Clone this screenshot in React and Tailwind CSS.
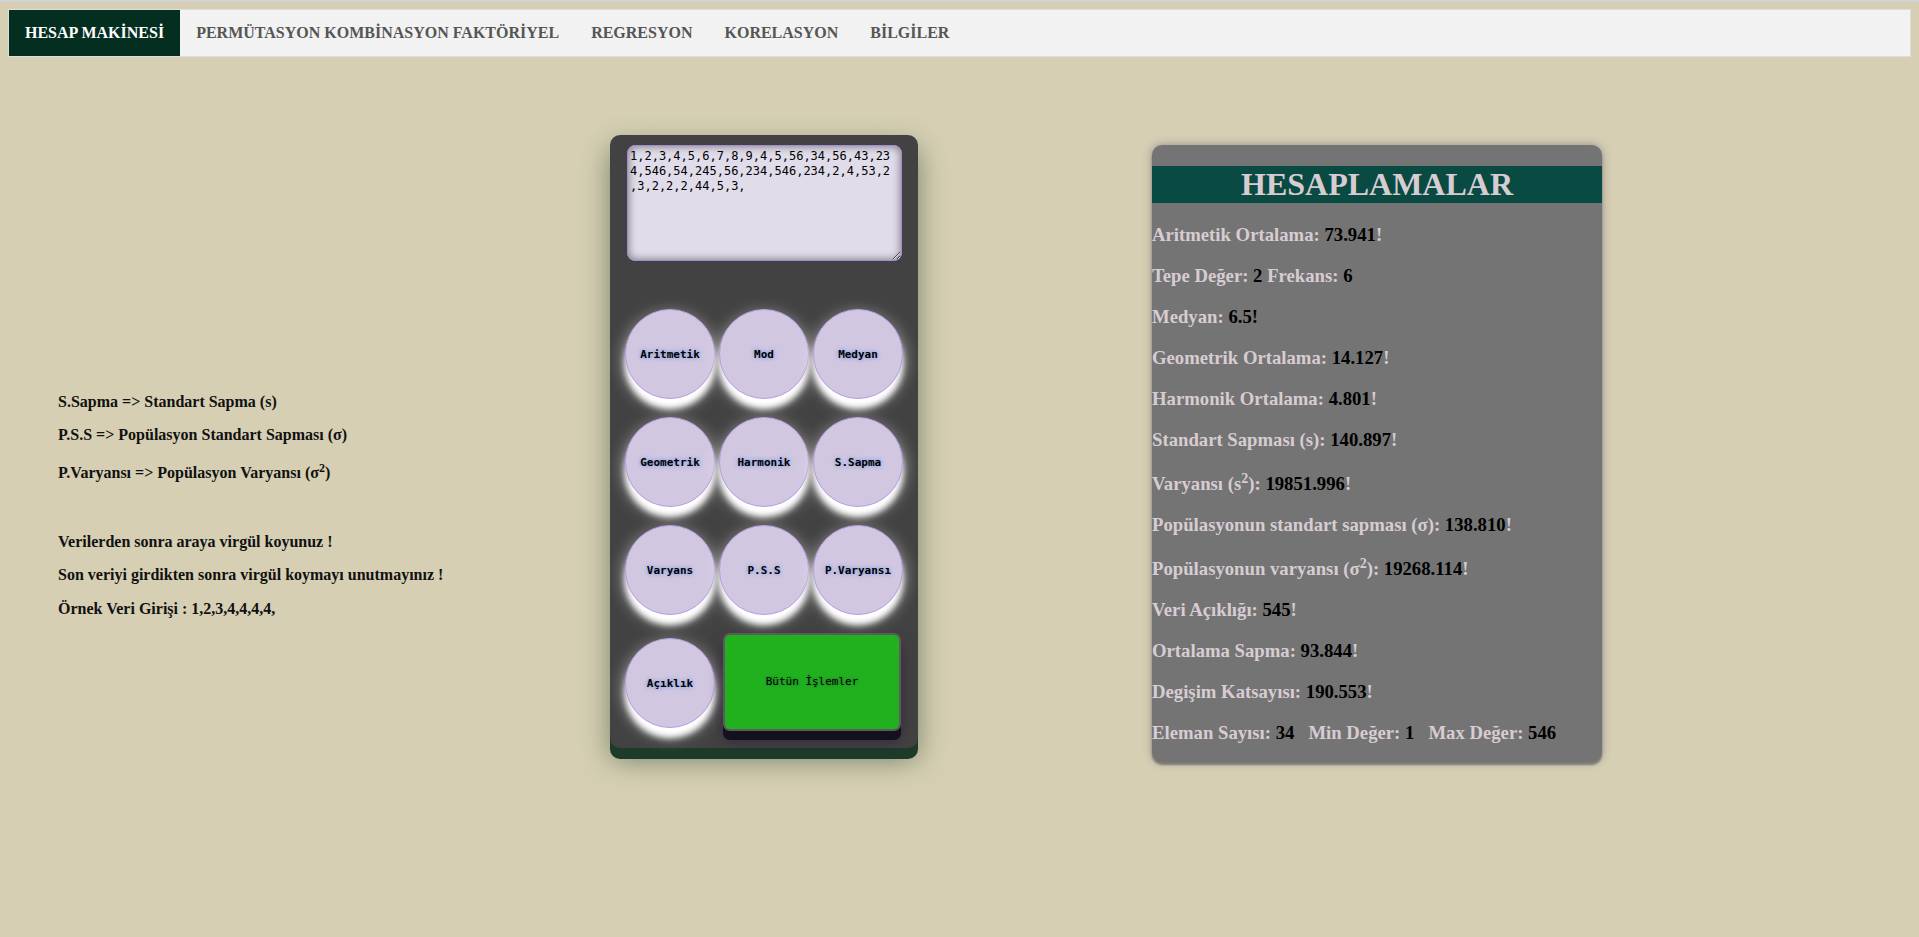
const tabs = ['HESAP MAKİNESİ', 'PERMÜTASYON KOMBİNASYON FAKTÖRİYEL', 'REGRESYON', 'KORELASYON', 'BİLGİLER'];

const circles = [
  ['Aritmetik', 'Mod', 'Medyan'],
  ['Geometrik', 'Harmonik', 'S.Sapma'],
  ['Varyans', 'P.S.S', 'P.Varyansı'],
];

const data = '1,2,3,4,5,6,7,8,9,4,5,56,34,56,43,234,546,54,245,56,234,546,234,2,4,53,2,3,2,2,2,44,5,3,';

function CircleButton({ label }) {
  return (
    <button className="w-[90px] h-[90px] shrink-0 rounded-full border border-[#b79de3] bg-[#d1c7e1] pt-[2px] text-[11px] font-bold text-black font-['DejaVu_Sans_Mono',monospace] [text-shadow:0_0_4px_rgba(59,123,224,0.75)] shadow-[0_10px_6px_#ffffff,0_6px_18px_rgba(255,255,255,0.6)]">
      {label}
    </button>
  );
}

function Row({ label, value, bang = true, bangDark = false }) {
  return (
    <h3 className="m-0 h-[22px] whitespace-nowrap text-[18.72px] font-bold leading-[22px] text-[#d8ccd3]">
      {label}
      <span className="text-black">{value}</span>
      {bang && <span className={bangDark ? 'text-black' : ''}>!</span>}
    </h3>
  );
}

export default function App() {
  return (
    <div className="min-h-screen bg-[#d6cfb3] font-['Liberation_Serif',serif]">
      <div className="h-[2px] bg-[#d3d3d3]" />
      <div className="px-2 pt-[7px]">
        <nav className="flex h-[48px] border border-[#dedede] bg-[#f2f2f2]">
          {tabs.map((t, i) => (
            <a
              key={t}
              className={`flex h-[46px] items-center px-4 text-[16px] font-bold ${i === 0 ? 'bg-[#032e20] text-white' : 'text-[#555]'}`}
            >
              {t}
            </a>
          ))}
        </nav>
      </div>

      <div className="flex items-start">
        {/* left info */}
        <div className="ml-[58px] mt-[336px] w-[552px] text-[16px] font-bold leading-[18px] text-[#111]">
          <p className="h-[18px]">S.Sapma =&gt; Standart Sapma (s)</p>
          <p className="mt-[15px] h-[18px]">P.S.S =&gt; Popülasyon Standart Sapması (σ)</p>
          <p className="mt-[20px] h-[18px]">P.Varyansı =&gt; Popülasyon Varyansı (σ<sup>2</sup>)</p>
          <p className="mt-[51px] h-[18px]">Verilerden sonra araya virgül koyunuz !</p>
          <p className="mt-[15px] h-[18px]">Son veriyi girdikten sonra virgül koymayı unutmayınız !</p>
          <p className="mt-[16px] h-[18px]">Örnek Veri Girişi : 1,2,3,4,4,4,4,</p>
        </div>

        {/* calculator */}
        <div className="mt-[78px] flex h-[613px] w-[308px] flex-col rounded-[10px] bg-[#434242] pl-[15px] pt-[10px] shadow-[0_11px_0_#1e3b2a,0_12px_28px_rgba(40,70,45,0.55)]">
          <textarea
            defaultValue={data}
            className="ml-[2px] h-[116px] w-[275px] rounded-[8px] border border-[#a58bd4] bg-[#e0dcea] pb-[2px] pl-[2px] pr-[8px] pt-[3px] text-[12px] leading-[15px] text-black font-['DejaVu_Sans_Mono',monospace] shadow-[inset_0_0_8px_rgba(0,0,0,0.5)] outline-none"
          />
          <div className="mt-[48px] flex flex-col gap-[18px]">
            {circles.map((row, r) => (
              <div key={r} className="flex gap-[4px]">
                {row.map((c) => (
                  <CircleButton key={c} label={c} />
                ))}
              </div>
            ))}
            <div className="flex items-start">
              <div className="mt-[5px]">
                <CircleButton label="Açıklık" />
              </div>
              <button className="ml-[8px] h-[98px] w-[178px] rounded-[7px] border-2 border-[#5c5c5c] bg-[#21b11f] text-[11px] text-black font-['DejaVu_Sans_Mono',monospace] [text-shadow:0_0_3px_rgba(30,90,60,0.8)] shadow-[0_9px_0_#15101d,0_10px_14px_rgba(40,20,60,0.55)]">
                Bütün İşlemler
              </button>
            </div>
          </div>
        </div>

        {/* results */}
        <div className="ml-[234px] mt-[88px] w-[450px] rounded-[10px] bg-[#747474] pb-[18px] pt-[21px] shadow-[0_0_8px_rgba(95,85,115,0.55),0_3px_2px_rgba(60,60,60,0.5)]">
          <h1 className="m-0 h-[37px] bg-[#094a42] text-center text-[32px] font-bold leading-[37px] text-[#d8ccd3]">
            HESAPLAMALAR
          </h1>
          <div className="mt-[21px] flex flex-col gap-[19px]">
            <Row label="Aritmetik Ortalama: " value="73.941" />
            <h3 className="m-0 h-[22px] text-[18.72px] font-bold leading-[22px] text-[#d8ccd3]">
              Tepe Değer: <span className="text-black">2</span> Frekans: <span className="text-black">6</span>
            </h3>
            <Row label="Medyan: " value="6.5" bangDark />
            <Row label="Geometrik Ortalama: " value="14.127" />
            <Row label="Harmonik Ortalama: " value="4.801" />
            <Row label="Standart Sapması (s): " value="140.897" />
            <h3 className="m-0 h-[25px] pt-[3px] text-[18.72px] font-bold leading-[22px] text-[#d8ccd3]">
              Varyansı (s<sup>2</sup>): <span className="text-black">19851.996</span>!
            </h3>
            <Row label="Popülasyonun standart sapması (σ): " value="138.810" />
            <h3 className="m-0 h-[25px] pt-[3px] text-[18.72px] font-bold leading-[22px] text-[#d8ccd3]">
              Popülasyonun varyansı (σ<sup>2</sup>): <span className="text-black">19268.114</span>!
            </h3>
            <Row label="Veri Açıklığı: " value="545" />
            <Row label="Ortalama Sapma: " value="93.844" />
            <Row label="Degişim Katsayısı: " value="190.553" />
            <h3 className="m-0 h-[22px] whitespace-pre text-[18.72px] font-bold leading-[22px] text-[#d8ccd3]">
              Eleman Sayısı: <span className="text-black">34</span>{'   '}Min Değer: <span className="text-black">1</span>{'   '}Max Değer: <span className="text-black">546</span>
            </h3>
          </div>
        </div>
      </div>
    </div>
  );
}
